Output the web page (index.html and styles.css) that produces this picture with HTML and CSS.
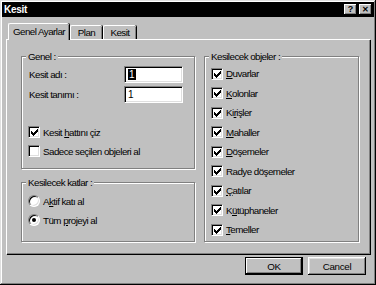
FILE: index.html
```html
<!DOCTYPE html>
<html lang="tr">
<head>
  <meta charset="UTF-8">
  <title>Kesit</title>
  <link rel="stylesheet" href="styles.css">
</head>
<body>

<div class="window">
  <div class="titlebar">
    <span class="title">Kesit</span>
    <div class="caption-buttons">
      <span class="cap-btn">?</span>
      <span class="cap-btn cap-close">&#x2715;</span>
    </div>
  </div>

  <div class="tabs">
    <div class="tab tab-active tab-genel">Genel Ayarlar</div>
    <div class="tab tab-plan">Plan</div>
    <div class="tab tab-kesit">Kesit</div>
  </div>

  <div class="panel">
    <div class="col-left">
      <div class="group group-genel">
        <div class="group-title">Genel :</div>
        <div class="field-row first">
          <span class="field-label">Kesit adı :</span>
          <div class="textbox"><span class="selected">1</span></div>
        </div>
        <div class="field-row">
          <span class="field-label">Kesit tanımı :</span>
          <div class="textbox">1</div>
        </div>
        <div class="check-row gap-big">
          <span class="checkbox checked"></span>
          <span>Kesit <u>h</u>attını çiz</span>
        </div>
        <div class="check-row">
          <span class="checkbox"></span>
          <span>Sadece seçilen ob<u>j</u>eleri al</span>
        </div>
      </div>

      <div class="group group-katlar">
        <div class="group-title">Kesilecek katlar :</div>
        <div class="radio-row first">
          <span class="radio"></span>
          <span>A<u>k</u>tif katı al</span>
        </div>
        <div class="radio-row">
          <span class="radio on"></span>
          <span>Tüm <u>p</u>rojeyi al</span>
        </div>
      </div>
    </div>

    <div class="group group-objeler">
      <div class="group-title">Kesilecek objeler :</div>
      <div class="obj-list">
        <div class="obj-row"><span class="checkbox checked"></span><span><u>D</u>uvarlar</span></div>
        <div class="obj-row"><span class="checkbox checked"></span><span><u>K</u>olonlar</span></div>
        <div class="obj-row"><span class="checkbox checked"></span><span>Ki<u>r</u>işler</span></div>
        <div class="obj-row"><span class="checkbox checked"></span><span><u>M</u>ahaller</span></div>
        <div class="obj-row"><span class="checkbox checked"></span><span><u>D</u>öşemeler</span></div>
        <div class="obj-row"><span class="checkbox checked"></span><span>Radye döşemeler</span></div>
        <div class="obj-row"><span class="checkbox checked"></span><span><u>Ç</u>atılar</span></div>
        <div class="obj-row"><span class="checkbox checked"></span><span>K<u>ü</u>tüphaneler</span></div>
        <div class="obj-row"><span class="checkbox checked"></span><span><u>T</u>emeller</span></div>
      </div>
    </div>
  </div>

  <div class="buttons">
    <button class="btn btn-default">OK</button>
    <button class="btn">Cancel</button>
  </div>
</div>

</body>
</html>
```

FILE: styles.css
```css
body {
  margin: 0;
  font-family: 'Liberation Sans', Arial, sans-serif;
  font-size: 9.8px;
  letter-spacing: -0.55px;
  color: #000;
  background: #c0c0c0;
}

.window {
  box-sizing: border-box;
  width: 376px;
  height: 285px;
  padding: 2px;
  background: #c0c0c0;
  box-shadow: inset -1px -1px #000, inset 1px 1px #dfdfdf,
              inset -2px -2px #808080, inset 2px 2px #fff;
  white-space: nowrap;
}

.titlebar {
  height: 15px;
  background: #000;
  display: flex;
  align-items: center;
  justify-content: space-between;
  padding: 0 2px 0 2px;
}

.title {
  color: #fff;
  font-weight: bold;
  font-size: 10px;
  letter-spacing: -0.3px;
}

.caption-buttons {
  display: flex;
  gap: 2px;
}

.cap-btn {
  box-sizing: border-box;
  width: 13px;
  height: 11px;
  background: #c0c0c0;
  box-shadow: inset -1px -1px #000, inset 1px 1px #fff, inset -2px -2px #808080;
  font-size: 9px;
  font-weight: bold;
  letter-spacing: 0;
  line-height: 11px;
  text-align: center;
}

.cap-close {
  font-size: 8px;
}

/* tabs */
.tabs {
  display: flex;
  align-items: flex-end;
  height: 16px;
  margin-top: 6px;
  padding-left: 6px;
}

.tab {
  box-sizing: border-box;
  height: 14px;
  line-height: 13px;
  text-align: center;
  border-left: 1px solid #fff;
  border-top: 1px solid #fff;
  border-top-left-radius: 2px;
  border-top-right-radius: 2px;
  box-shadow: inset -1px 0 #808080, 1px 0 #000;
}

.tab-active {
  height: 17px;
  line-height: 15px;
  position: relative;
  z-index: 1;
  margin-bottom: -1px;
  background: #c0c0c0;
}

.tab-genel { width: 61px; }
.tab-plan { width: 32px; margin-left: 1px; }
.tab-kesit { width: 33px; margin-left: 1px; }

.panel {
  box-sizing: border-box;
  width: 364px;
  height: 215px;
  margin-left: 4px;
  display: flex;
  gap: 9px;
  padding: 10px 0 0 14px;
  border-top: 1px solid #fff;
  border-left: 1px solid #fff;
  box-shadow: inset -1px -1px #808080, 1px 1px #000;
}

.col-left {
  display: flex;
  flex-direction: column;
  gap: 13px;
}

/* etched group boxes */
.group {
  box-sizing: border-box;
  border: 1px solid #808080;
  box-shadow: inset 1px 1px #fff, 1px 1px #fff;
  padding: 0 0 0 6px;
}

.col-left .group {
  width: 174px;
}

.group-genel { height: 113px; margin-top: 6px; }
.group-katlar { height: 60px; }
.group-objeler { width: 155px; height: 186px; margin-top: 6px; }

.group-title {
  width: max-content;
  margin: -7px 0 0 -2px;
  padding: 0 2px;
  line-height: 13px;
  background: #c0c0c0;
}

.field-row {
  display: flex;
  align-items: center;
  justify-content: space-between;
  padding-right: 11px;
  margin-top: 3px;
}

.field-label {
  padding-left: 1px;
}

.textbox {
  box-sizing: border-box;
  width: 59px;
  height: 17px;
  background: #fff;
  border-top: 1px solid #808080;
  border-left: 1px solid #808080;
  border-right: 1px solid #fff;
  border-bottom: 1px solid #fff;
  box-shadow: inset 1px 1px #000, inset -1px -1px #dfdfdf;
  padding: 1px 0 0 3px;
  font-size: 10px;
  letter-spacing: 0;
  line-height: 13px;
}

.selected {
  background: #000;
  color: #fff;
  padding: 0 1px;
}

.check-row,
.radio-row {
  display: flex;
  align-items: center;
  gap: 3px;
  height: 16px;
  margin-top: 3px;
}

.check-row.gap-big {
  margin-top: 21px;
}

.radio-row.first {
  margin-top: 4px;
}

.checkbox {
  box-sizing: border-box;
  width: 12px;
  height: 12px;
  flex: none;
  background: #fff;
  border: 1px solid;
  border-color: #808080 #fff #fff #808080;
  box-shadow: inset 1px 1px #000, inset -1px -1px #dfdfdf;
  background-repeat: no-repeat;
  background-position: 2px 2px;
}

.checkbox.checked {
  background-image: url("data:image/svg+xml;utf8,<svg xmlns='http://www.w3.org/2000/svg' width='7' height='7' shape-rendering='crispEdges'><rect x='0' y='2' width='1' height='3'/><rect x='1' y='3' width='1' height='3'/><rect x='2' y='4' width='1' height='3'/><rect x='3' y='3' width='1' height='3'/><rect x='4' y='2' width='1' height='3'/><rect x='5' y='1' width='1' height='3'/><rect x='6' y='0' width='1' height='3'/></svg>");
}

.radio {
  box-sizing: border-box;
  width: 12px;
  height: 12px;
  flex: none;
  border-radius: 50%;
  background: #fff;
  border: 1px solid;
  border-color: #808080 #fff #fff #808080;
  box-shadow: inset 1px 1px #000, inset -1px -1px #dfdfdf;
  display: flex;
  align-items: center;
  justify-content: center;
}

.radio.on::after {
  content: "";
  width: 4px;
  height: 4px;
  border-radius: 50%;
  background: #000;
}

.obj-list {
  margin-top: 1px;
}

.obj-row {
  display: flex;
  align-items: center;
  gap: 3px;
  height: 19.5px;
}

/* bottom buttons */
.buttons {
  display: flex;
  justify-content: flex-end;
  gap: 5px;
  margin-top: 3px;
  padding-right: 8px;
}

.btn {
  box-sizing: border-box;
  width: 58px;
  height: 18px;
  font-family: 'Liberation Sans', Arial, sans-serif;
  font-size: 9.8px;
  letter-spacing: -0.3px;
  color: #000;
  background: #c0c0c0;
  border: none;
  padding: 0;
  box-shadow: inset -1px -1px #000, inset 1px 1px #fff, inset -2px -2px #808080, inset 2px 2px #dfdfdf;
}

.btn-default {
  border: 1px solid #000;
  box-shadow: inset -1px -1px #000, inset 1px 1px #fff, inset -2px -2px #808080;
}
```
